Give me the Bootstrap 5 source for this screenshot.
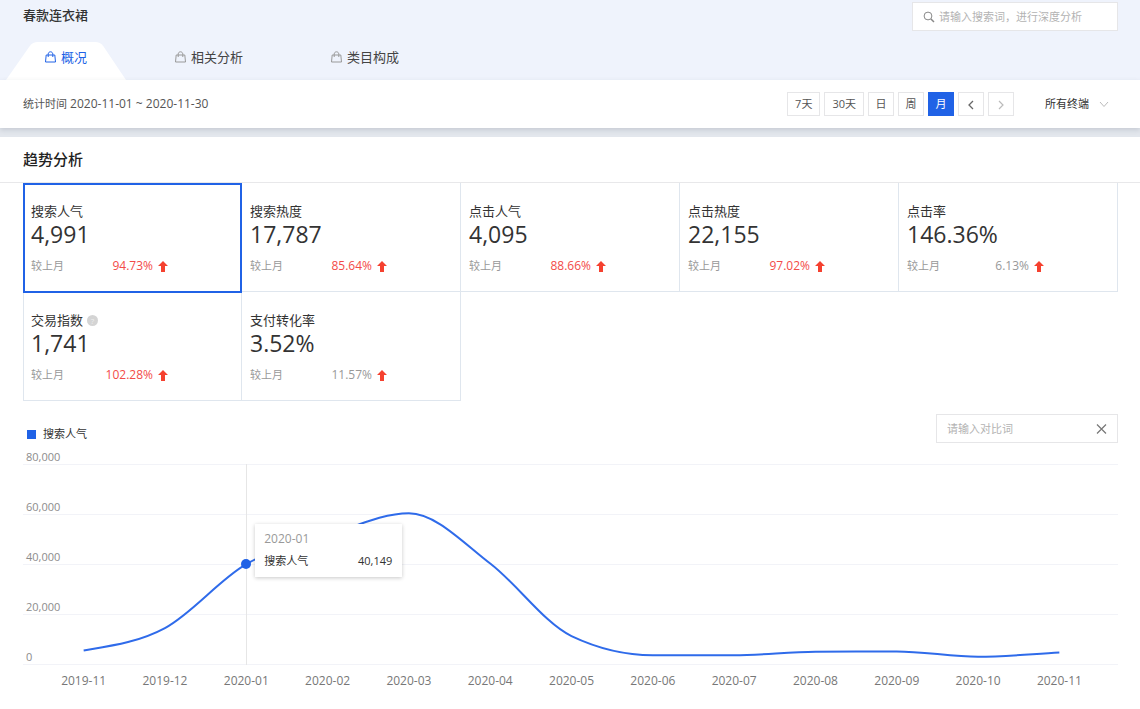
<!DOCTYPE html>
<html lang="zh-CN">
<head>
<meta charset="utf-8">
<meta name="viewport" content="width=device-width, initial-scale=1">
<title>春款连衣裙 - 趋势分析</title>
<link href="https://cdn.jsdelivr.net/npm/bootstrap@5.3.0/dist/css/bootstrap.min.css" rel="stylesheet">
<style>
:root { --brand: #2062e6; --line: #e6e6e8; --cell-line: #dfe6ee; --ink: #333; --muted: #999; }
body { font-family: "Open Sans", "Noto Sans CJK SC", sans-serif; font-size: 12px; line-height: 16px; color: var(--ink); background: #fff; }
.gutter { padding-left: 23px; padding-right: 22px; }
.cjk { font-size: 11px; }

.page-head { background: #eff3fc; height: 80px; }
.head-row { height: 42px; padding-top: 2px; }
.page-name { font-size: 13px; line-height: 26px; font-weight: 500; margin: 0; }
.search-box, .compare-box { background: #fff; border: 1px solid var(--line); height: 29px; }
.search-box { width: 206px; padding: 0 10px; }
.compare-box { width: 182px; padding: 0 10px; }
.plain-input { border: 0; outline: 0; background: transparent; padding: 0; min-width: 0; font-size: 11px; line-height: 16px; color: var(--ink); }
.plain-input::placeholder { color: #b3b3b3; opacity: 1; }

.tab-row { padding-left: 1px; }
.tab-link { position: relative; height: 38px; padding: 0 44px 8px; gap: 5px; font-size: 13px; color: #444; text-decoration: none; }
.tab-link svg { color: #999; }
.tab-link.active { color: var(--brand); }
.tab-link.active svg { color: var(--brand); }
.tab-shape { position: absolute; top: 0; left: 5px; right: 5px; height: 38px; z-index: 0; }
.tab-shape svg { width: 100%; height: 100%; display: block; }
.tab-link > svg, .tab-link > .tab-text { position: relative; z-index: 1; }

.filter-bar { height: 48px; background: #fff; box-shadow: 0 2px 5px rgba(80, 90, 110, .2); position: relative; }
.date-text { color: #555; }
.spacer { height: 9px; background: #e3e7ed; }
.range-btn { height: 24px; min-width: 26px; padding: 0 7px; border: 1px solid var(--line); background: #fff; color: #555; font-size: 11px; line-height: 22px; }
.range-btn.one { padding: 0; }
.range-btn.active { background: var(--brand); border-color: var(--brand); color: #fff; }
.end-select { width: 64px; height: 24px; border: 0; padding: 0; margin: 0 9px 0 27px; font-size: 11px; color: var(--ink);
  background: url("data:image/svg+xml,%3Csvg xmlns='http://www.w3.org/2000/svg' width='10' height='7' viewBox='0 0 10 7'%3E%3Cpath d='M1 1l4 4.5L9 1' fill='none' stroke='%23bbb'/%3E%3C/svg%3E") no-repeat right center; appearance: none; }

.block-title { font-size: 15px; line-height: 44px; font-weight: 500; margin: 0; border-bottom: 1px solid #e8e8ea; color: #222; height: 46px; }
.metric { height: 109px; padding: 19px 8px 0; border: solid var(--cell-line); border-width: 0 1px 1px 0; background: #fff; color: var(--ink); text-align: left; display: flex; flex-direction: column; }
.metric.first { border-left-width: 1px; padding-left: 7px; }
.metric.active { border: 2px solid var(--brand); padding: 17px 6px 0; height: 110px; margin: 0 0 -1px; position: relative; }
.metric-name { font-size: 13px; line-height: 18px; }
.metric-value { font-size: 23px; line-height: 28px; }
.metric-foot { width: 137px; line-height: 16px; margin-top: 10px; color: var(--muted); gap: 5px; }
.up-rate { color: #f34b48; }
.info-dot { width: 11px; height: 11px; background: #d4d4d4; border-radius: 50%; color: #eee; font-size: 8px; line-height: 11px; text-align: center; }

.legend-row { padding-top: 13px; height: 50px; }
.legend-key { width: 9px; height: 9px; background: var(--brand); }
.legend-item { padding: 12px 0 0 4px; gap: 7px; }
.plot { position: relative; margin-top: 13px; height: 201px; }
.grid-step { height: 50px; border-top: 1px solid #f2f3f8; }
.grid-step:last-child { height: 1px; }
.grid-step span { display: block; margin-top: -16px; padding-left: 3px; color: #8c8c8c; font-size: 11px; }
.canvas { position: absolute; inset: 0 18px 0 20px; }
.canvas svg { width: 100%; height: 100%; display: block; overflow: visible; }
.guide { position: absolute; top: 0; bottom: 0; width: 1px; background: #e6e6e6; }
.dot { position: absolute; width: 10px; height: 10px; margin: -5px 0 0 -5px; border-radius: 50%; background: var(--brand); }
.tip { position: absolute; width: 147px; height: 53px; margin: -40px 0 0 9px; padding: 7px 10px 0 9px; background: #fff; box-shadow: 0 1px 4px rgba(0, 0, 0, .22); }
.tip-month { color: var(--muted); }
.tip-value { font-size: 11px; }
.tip-row { margin-top: 6px; }
.months { padding: 8px 18px 0 20px; color: #777; }
.months span { flex: 1 1 0; text-align: center; }
</style>
</head>
<body>
<header class="page-head">
  <div class="head-row gutter d-flex justify-content-between align-items-start">
    <h1 class="page-name">春款连衣裙</h1>
    <div class="search-box d-flex align-items-center gap-1">
      <svg width="12" height="12" viewBox="0 0 12 12" fill="none" stroke="#888" aria-hidden="true"><circle cx="5" cy="5" r="3.9"/><path d="M8 8l3 3" stroke-width="1.5"/></svg>
      <input class="plain-input flex-fill" type="text" aria-label="搜索词" placeholder="请输入搜索词，进行深度分析">
    </div>
  </div>
  <nav class="tab-row d-flex">
    <a class="tab-link active d-flex align-items-center" href="#overview">
      <span class="tab-shape"><svg viewBox="0 0 121 38" preserveAspectRatio="none" aria-hidden="true"><path d="M0 38L24 4Q27 0 32 0H90Q95 0 98 4L121 38Z" fill="#fff"/></svg></span>
      <svg width="11" height="12" viewBox="0 0 11 12" fill="none" stroke="currentColor" aria-hidden="true"><path d="M1.2 4h8.6l.7 7H.5zM3.2 6V3.2c0-3.2 4.6-3.2 4.6 0V6"/></svg>
      <span class="tab-text">概况</span>
    </a>
    <a class="tab-link d-flex align-items-center" href="#related">
      <svg width="11" height="12" viewBox="0 0 11 12" fill="none" stroke="currentColor" aria-hidden="true"><path d="M1.2 4h8.6l.7 7H.5zM3.2 6V3.2c0-3.2 4.6-3.2 4.6 0V6"/></svg>
      <span class="tab-text">相关分析</span>
    </a>
    <a class="tab-link d-flex align-items-center" href="#category">
      <svg width="11" height="12" viewBox="0 0 11 12" fill="none" stroke="currentColor" aria-hidden="true"><path d="M1.2 4h8.6l.7 7H.5zM3.2 6V3.2c0-3.2 4.6-3.2 4.6 0V6"/></svg>
      <span class="tab-text">类目构成</span>
    </a>
  </nav>
</header>

<section class="filter-bar gutter d-flex justify-content-between align-items-center">
  <div class="date-text"><span class="cjk">统计时间</span> 2020-11-01 ~ 2020-11-30</div>
  <div class="d-flex align-items-center gap-1">
    <button class="range-btn" type="button">7天</button>
    <button class="range-btn" type="button">30天</button>
    <button class="range-btn one" type="button">日</button>
    <button class="range-btn one" type="button">周</button>
    <button class="range-btn one active" type="button">月</button>
    <button class="range-btn one" type="button" aria-label="上一月"><svg width="6" height="10" viewBox="0 0 6 10" fill="none" stroke="#666" stroke-width="1.3"><path d="M5 1L1 5l4 4"/></svg></button>
    <button class="range-btn one" type="button" aria-label="下一月"><svg width="6" height="10" viewBox="0 0 6 10" fill="none" stroke="#bbb" stroke-width="1.2"><path d="M1 1l4 4-4 4"/></svg></button>
    <select class="end-select" aria-label="终端"><option>所有终端</option></select>
  </div>
</section>
<div class="spacer"></div>

<main>
  <h2 class="block-title gutter">趋势分析</h2>
  <div class="gutter">
    <div class="row row-cols-5 g-0">
      <div class="col"><button type="button" class="metric first active w-100">
        <span class="metric-name">搜索人气</span><span class="metric-value">4,991</span>
        <span class="metric-foot d-flex align-items-center"><span class="cjk me-auto">较上月</span><span class="up-rate">94.73%</span><svg width="10" height="11" viewBox="0 0 10 11" fill="#f5412f"><path d="M5 0l5 5H7v6H3V5H0z"/></svg></span>
      </button></div>
      <div class="col"><button type="button" class="metric w-100">
        <span class="metric-name">搜索热度</span><span class="metric-value">17,787</span>
        <span class="metric-foot d-flex align-items-center"><span class="cjk me-auto">较上月</span><span class="up-rate">85.64%</span><svg width="10" height="11" viewBox="0 0 10 11" fill="#f5412f"><path d="M5 0l5 5H7v6H3V5H0z"/></svg></span>
      </button></div>
      <div class="col"><button type="button" class="metric w-100">
        <span class="metric-name">点击人气</span><span class="metric-value">4,095</span>
        <span class="metric-foot d-flex align-items-center"><span class="cjk me-auto">较上月</span><span class="up-rate">88.66%</span><svg width="10" height="11" viewBox="0 0 10 11" fill="#f5412f"><path d="M5 0l5 5H7v6H3V5H0z"/></svg></span>
      </button></div>
      <div class="col"><button type="button" class="metric w-100">
        <span class="metric-name">点击热度</span><span class="metric-value">22,155</span>
        <span class="metric-foot d-flex align-items-center"><span class="cjk me-auto">较上月</span><span class="up-rate">97.02%</span><svg width="10" height="11" viewBox="0 0 10 11" fill="#f5412f"><path d="M5 0l5 5H7v6H3V5H0z"/></svg></span>
      </button></div>
      <div class="col"><button type="button" class="metric w-100">
        <span class="metric-name">点击率</span><span class="metric-value">146.36%</span>
        <span class="metric-foot d-flex align-items-center"><span class="cjk me-auto">较上月</span><span>6.13%</span><svg width="10" height="11" viewBox="0 0 10 11" fill="#f5412f"><path d="M5 0l5 5H7v6H3V5H0z"/></svg></span>
      </button></div>
      <div class="col"><button type="button" class="metric first w-100">
        <span class="metric-name d-flex align-items-center gap-1">交易指数<span class="info-dot">?</span></span><span class="metric-value">1,741</span>
        <span class="metric-foot d-flex align-items-center"><span class="cjk me-auto">较上月</span><span class="up-rate">102.28%</span><svg width="10" height="11" viewBox="0 0 10 11" fill="#f5412f"><path d="M5 0l5 5H7v6H3V5H0z"/></svg></span>
      </button></div>
      <div class="col"><button type="button" class="metric w-100">
        <span class="metric-name">支付转化率</span><span class="metric-value">3.52%</span>
        <span class="metric-foot d-flex align-items-center"><span class="cjk me-auto">较上月</span><span>11.57%</span><svg width="10" height="11" viewBox="0 0 10 11" fill="#f5412f"><path d="M5 0l5 5H7v6H3V5H0z"/></svg></span>
      </button></div>
    </div>

    <div class="legend-row d-flex justify-content-between align-items-start">
      <div class="legend-item d-flex align-items-center cjk"><span class="legend-key"></span>搜索人气</div>
      <div class="compare-box d-flex align-items-center">
        <input class="plain-input flex-fill" type="text" aria-label="对比词" placeholder="请输入对比词">
        <button class="plain-input d-flex" type="button" aria-label="清除"><svg width="11" height="10" viewBox="0 0 11 10" fill="none" stroke="#777" stroke-width="1.2"><path d="M1 .5l9 9M10 .5l-9 9"/></svg></button>
      </div>
    </div>

    <div class="plot">
      <div class="grid-step"><span>80,000</span></div>
      <div class="grid-step"><span>60,000</span></div>
      <div class="grid-step"><span>40,000</span></div>
      <div class="grid-step"><span>20,000</span></div>
      <div class="grid-step"><span>0</span></div>
      <div class="canvas">
        <div class="guide" style="left:19.23%"></div>
        <svg viewBox="0 0 1300 80000" preserveAspectRatio="none" aria-hidden="true"><path id="trend" fill="none" stroke="#2f6bea" stroke-width="2" vector-effect="non-scaling-stroke"/></svg>
        <div class="dot" style="left:19.23%;top:49.8%"></div>
        <div class="tip" style="left:19.23%;top:49.8%">
          <div class="tip-month">2020-01</div>
          <div class="tip-row d-flex justify-content-between align-items-center"><span class="cjk">搜索人气</span><span class="tip-value">40,149</span></div>
        </div>
      </div>
    </div>
    <div class="months d-flex">
      <span>2019-11</span><span>2019-12</span><span>2020-01</span><span>2020-02</span><span>2020-03</span><span>2020-04</span><span>2020-05</span><span>2020-06</span><span>2020-07</span><span>2020-08</span><span>2020-09</span><span>2020-10</span><span>2020-11</span>
    </div>
  </div>
</main>

<script src="https://cdn.jsdelivr.net/npm/bootstrap@5.3.0/dist/js/bootstrap.bundle.min.js"></script>
<script>
// Monotone cubic curve through the monthly values, one column of 100 units per month.
const values = [5800, 14700, 40149, 51500, 60400, 40400, 11500, 3900, 3900, 5300, 5400, 3300, 4991];
const slope = values.slice(1).map((v, i) => v - values[i]);
const tangent = values.map((v, i) => {
  if (i === 0) return slope[0] * 0.6;
  if (i === values.length - 1) return slope[i - 1];
  const a = slope[i - 1], b = slope[i];
  if (a * b <= 0) return 0;
  return Math.sign(a) * Math.min(Math.abs(a) * 2, Math.abs(b) * 2, Math.abs(a + b) / 2);
});
const X = i => i * 100 + 50, Y = v => 80000 - v;
let d = `M${X(0)} ${Y(values[0])}`;
for (let i = 1; i < values.length; i++) {
  d += `C${X(i - 1) + 33} ${Y(values[i - 1] + tangent[i - 1] / 3)} ${X(i) - 33} ${Y(values[i] - tangent[i] / 3)} ${X(i)} ${Y(values[i])}`;
}
document.getElementById('trend').setAttribute('d', d);
</script>
</body>
</html>
